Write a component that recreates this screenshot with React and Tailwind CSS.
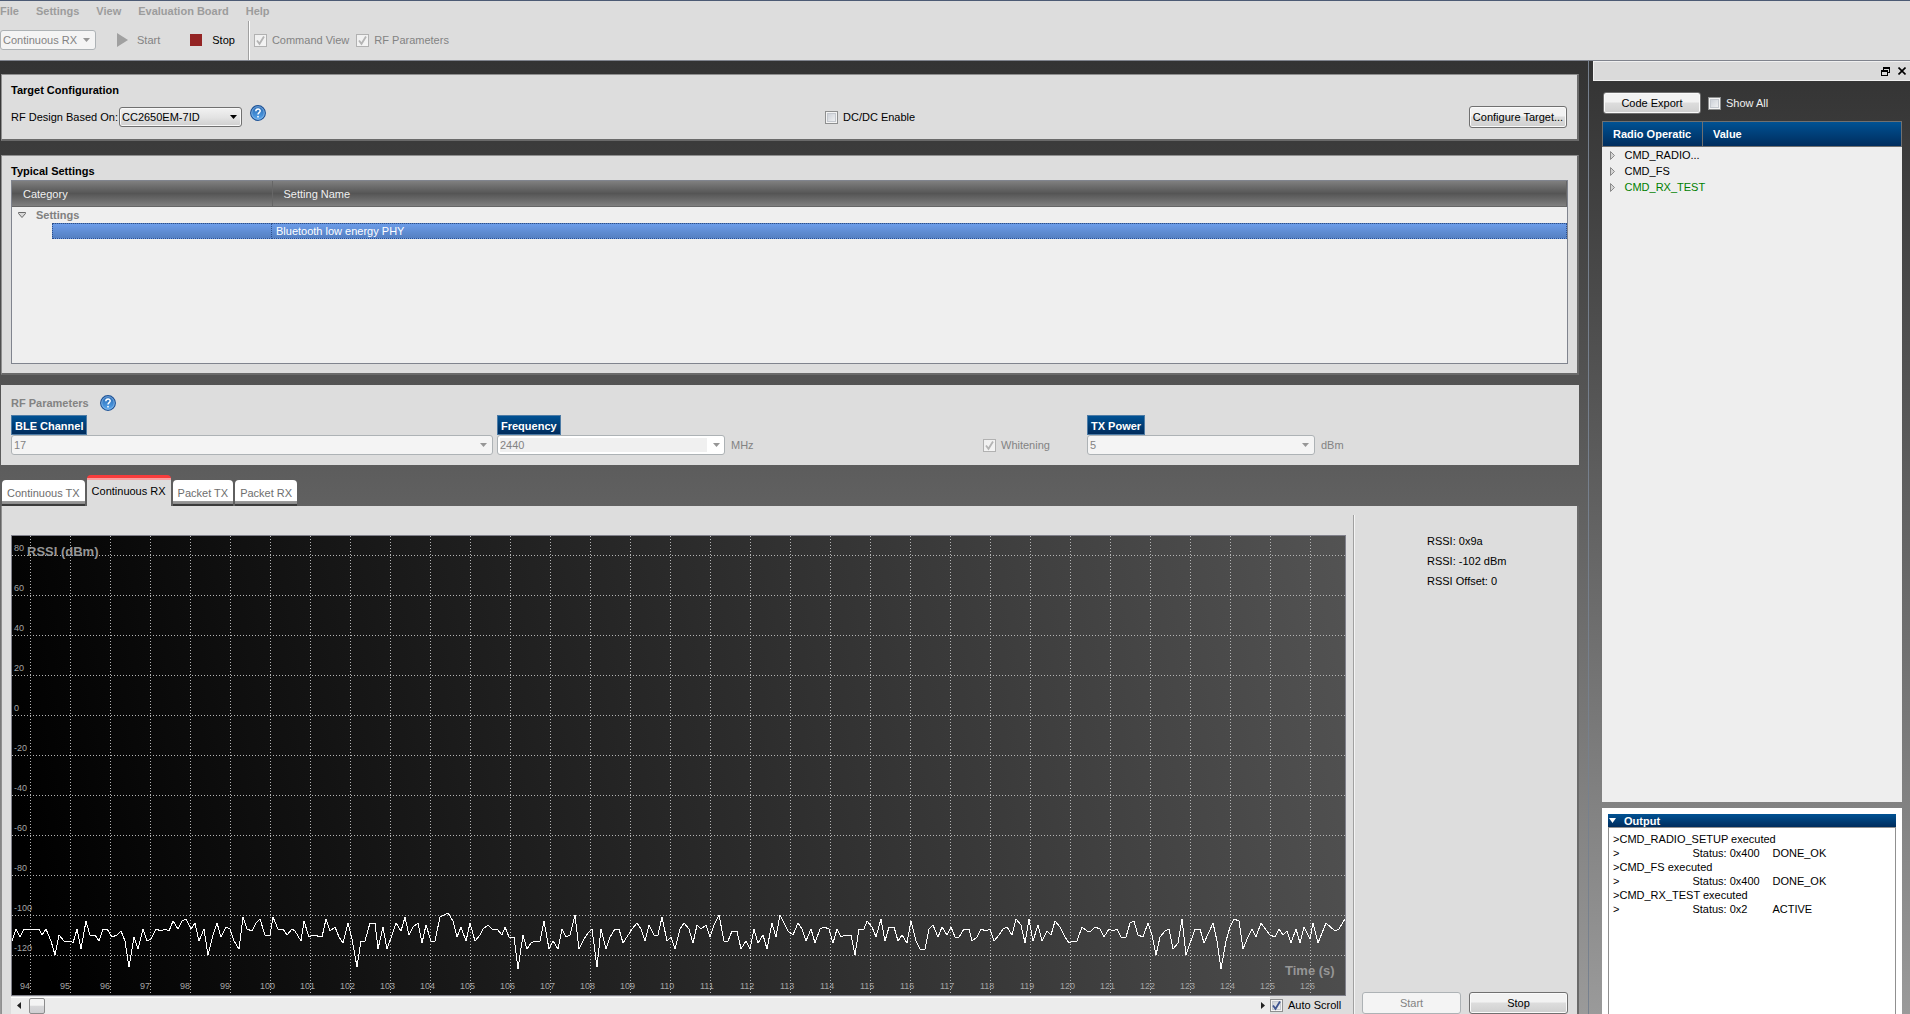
import React, { useState } from 'react'

const X_TICKS = Array.from({ length: 33 }, (_, i) => 94 + i)
const Y_TICKS = [80, 60, 40, 20, 0, -20, -40, -60, -80, -100, -120]

// [x, dBm] pairs
const SAMPLES = [
  [0, -113], [4, -107], [8, -111], [12, -107], [27, -107], [30, -110], [34, -107], [39, -113], [43, -120], [47, -110],
  [52, -113], [59, -113], [61, -114], [65, -107], [69, -117], [74, -103], [78, -110], [83, -110], [87, -113], [91, -107],
  [95, -107], [100, -111], [105, -110], [109, -108], [113, -113], [117, -126], [122, -111], [126, -117], [131, -107], [135, -113],
  [139, -112], [144, -107], [149, -108], [153, -107], [157, -108], [161, -103], [166, -107], [170, -103], [174, -102], [179, -107],
  [183, -104], [187, -113], [192, -107], [196, -120], [201, -110], [205, -104], [209, -111], [214, -106], [218, -107], [222, -113],
  [227, -117], [231, -101], [235, -107], [240, -108], [244, -104], [248, -102], [253, -110], [258, -110], [261, -101], [266, -107],
  [271, -107], [275, -110], [280, -107], [283, -108], [289, -113], [292, -103], [297, -111], [301, -110], [310, -111], [314, -102],
  [318, -108], [323, -106], [327, -111], [331, -114], [336, -104], [340, -112], [345, -126], [349, -113], [353, -113], [358, -104],
  [363, -104], [366, -117], [371, -106], [375, -117], [380, -110], [384, -104], [389, -108], [393, -101], [397, -110], [401, -106],
  [406, -104], [410, -114], [414, -105], [419, -113], [423, -113], [428, -101], [432, -100], [436, -99], [441, -103], [445, -111],
  [449, -106], [454, -113], [458, -104], [463, -113], [468, -110], [471, -107], [476, -105], [480, -107], [485, -107], [490, -110],
  [493, -106], [497, -111], [502, -111], [506, -127], [511, -110], [515, -117], [519, -114], [523, -113], [528, -113], [532, -103],
  [537, -117], [541, -113], [546, -117], [550, -107], [554, -111], [558, -110], [563, -100], [567, -117], [572, -112], [576, -109],
  [580, -107], [585, -126], [589, -107], [594, -117], [598, -111], [603, -107], [607, -107], [611, -114], [620, -107], [625, -104],
  [629, -107], [633, -113], [637, -105], [642, -110], [646, -110], [650, -101], [655, -113], [659, -111], [663, -117], [668, -107],
  [672, -104], [677, -107], [681, -114], [685, -105], [689, -107], [694, -105], [698, -111], [702, -105], [707, -100], [712, -113],
  [716, -113], [720, -108], [725, -108], [729, -117], [734, -113], [738, -117], [742, -107], [746, -114], [751, -110], [755, -117],
  [760, -104], [764, -111], [768, -100], [772, -104], [776, -108], [781, -110], [786, -104], [790, -107], [794, -113], [799, -107],
  [803, -114], [808, -107], [812, -106], [817, -107], [821, -114], [825, -107], [829, -111], [833, -110], [839, -110], [843, -120],
  [847, -107], [852, -107], [855, -103], [860, -106], [864, -111], [869, -102], [873, -113], [877, -106], [882, -106], [886, -113],
  [890, -110], [895, -114], [899, -103], [904, -113], [908, -117], [913, -117], [917, -107], [921, -105], [926, -111], [930, -106],
  [935, -110], [939, -106], [943, -111], [947, -111], [952, -107], [957, -107], [960, -113], [965, -111], [969, -107], [974, -108],
  [978, -107], [982, -113], [987, -110], [991, -107], [995, -106], [1000, -110], [1004, -102], [1009, -105], [1013, -114], [1017, -102],
  [1021, -113], [1026, -105], [1030, -113], [1035, -108], [1039, -110], [1043, -103], [1048, -106], [1053, -111], [1057, -114], [1061, -113],
  [1065, -113], [1070, -106], [1075, -108], [1079, -108], [1083, -106], [1088, -107], [1092, -111], [1097, -107], [1101, -108], [1105, -107],
  [1109, -111], [1114, -111], [1118, -104], [1122, -103], [1126, -110], [1131, -111], [1136, -104], [1140, -110], [1144, -120], [1148, -111],
  [1153, -108], [1157, -107], [1161, -117], [1166, -114], [1170, -102], [1174, -120], [1183, -107], [1188, -107], [1192, -114], [1201, -104],
  [1205, -113], [1209, -127], [1214, -113], [1218, -106], [1222, -102], [1227, -103], [1231, -117], [1236, -111], [1240, -107], [1244, -111],
  [1249, -104], [1258, -110], [1263, -111], [1267, -107], [1271, -110], [1275, -108], [1279, -114], [1284, -107], [1288, -114], [1292, -106],
  [1298, -112], [1301, -104], [1306, -114], [1314, -104], [1323, -108], [1327, -107], [1333, -102],
]

const toX = (t) => 18 + (t - 94) * 40
const toY = (dbm) => 179 - dbm * 2

const OUTPUT = [
  ['CMD_RADIO_SETUP executed'],
  ['Status: 0x400', 'DONE_OK'],
  ['CMD_FS executed'],
  ['Status: 0x400', 'DONE_OK'],
  ['CMD_RX_TEST executed'],
  ['Status: 0x2', 'ACTIVE'],
]

const Check = ({ id, label, checked, disabled, className = '' }) => {
  const [on, setOn] = useState(Boolean(checked))
  return (
    <div className={`flex items-center gap-[5px] ${className}`}>
      <span className="relative flex w-[13px] h-[13px]">
        <input
          id={id}
          type="checkbox"
          checked={on}
          disabled={disabled}
          onChange={(e) => setOn(e.target.checked)}
          className="appearance-none w-[13px] h-[13px] border border-[#8e8f8f] bg-linear-to-br from-[#c5cad2] to-[#f8f8f8] shadow-[inset_0_0_0_1px_#f4f4f4,inset_0_0_0_2px_#c4c8ce] disabled:border-[#b1b1b1] disabled:from-[#f0f0f0] disabled:to-[#f4f4f4] disabled:shadow-none"
        />
        {on && (
          <svg viewBox="0 0 13 13" className={`absolute inset-0 pointer-events-none ${disabled ? 'text-[#b4b4b4]' : 'text-[#3f5590]'}`}>
            <path d="M3 6.5 L5.5 9.8 L10 2.5" fill="none" stroke="currentColor" strokeWidth="1.8" />
          </svg>
        )}
      </span>
      <label htmlFor={id}>{label}</label>
    </div>
  )
}

const Combo = ({ id, options, disabled, label, className = '', arrow = 'right-[6px]', look }) => (
  <div className={`relative flex h-5 ${className}`}>
    <select
      id={id}
      aria-label={label}
      disabled={disabled}
      className={`appearance-none w-full h-5 border rounded-[3px] pl-[2px] pr-[14px] leading-4 opacity-100 ${
        look || (disabled ? 'border-[#adb2b5] bg-[#f4f4f4] text-[#838383]' : 'border-[#707070] bg-linear-to-b from-[#f2f2f2] via-[#e4e4e4] to-[#cfcfcf] text-black shadow-[inset_0_0_0_1px_#f8f8f8]')
      }`}
    >
      {options.map((o) => (
        <option key={o}>{o}</option>
      ))}
    </select>
    <svg viewBox="0 0 7 4" className={`absolute top-2 w-[7px] h-1 pointer-events-none ${arrow} ${disabled ? 'text-[#969696]' : 'text-black'}`}>
      <path d="M0 0 H7 L3.5 4 Z" fill="currentColor" />
    </svg>
  </div>
)

const Help = () => (
  <button aria-label="Help" className="w-4 h-4">
    <svg viewBox="0 0 16 16" className="w-4 h-4">
      <defs>
        <linearGradient id="help" x1="0" y1="0" x2="0" y2="1">
          <stop offset="0" stopColor="#2566b0" />
          <stop offset="1" stopColor="#5aa8ee" />
        </linearGradient>
      </defs>
      <circle cx="8" cy="8" r="7.3" fill="url(#help)" stroke="#1f5498" strokeWidth="1.3" />
      <circle cx="8" cy="8" r="6.3" fill="none" stroke="#a9d0f5" strokeWidth="0.6" />
      <path d="M5.8 6.2 C5.8 3.2 10.3 3.3 10.2 6 C10.1 7.6 8 7.6 8 9.6" fill="none" stroke="#fff" strokeWidth="1.5" />
      <rect x="7.2" y="10.9" width="1.6" height="1.6" fill="#fff" />
    </svg>
  </button>
)

const PushButton = ({ children, disabled, className = '' }) => (
  <button
    disabled={disabled}
    className={`h-[22px] border rounded-[3px] whitespace-nowrap ${
      disabled
        ? 'border-[#adb2b5] bg-[#f4f4f4] text-[#838383]'
        : 'border-[#707070] bg-linear-to-b from-[#f2f2f2] from-45% via-[#dddddd] via-50% to-[#cfcfcf] text-black shadow-[inset_0_0_0_1px_#fafafa]'
    } ${className}`}
  >
    {children}
  </button>
)

const FieldLabel = ({ htmlFor, children }) => (
  <label htmlFor={htmlFor} className="self-start h-5 px-[3px] border border-[#4d7ba5] bg-linear-to-b from-[#005294] to-[#002c5c] text-white font-bold leading-5">
    {children}
  </label>
)

const Chart = () => (
  <svg className="flex-1 w-full min-h-[400px] bg-[linear-gradient(78deg,#000_3%,#535353_100%)]" fontFamily="Liberation Sans, Arial, sans-serif">
    <g stroke="#b4b4b4" strokeDasharray="1 2" shapeRendering="crispEdges">
      {X_TICKS.map((t) => (
        <line key={t} x1={toX(t) + 0.5} x2={toX(t) + 0.5} y1="0" y2="457" />
      ))}
      {Y_TICKS.map((v) => (
        <line key={v} x1="0" x2="100%" y1={toY(v) + 0.5} y2={toY(v) + 0.5} />
      ))}
    </g>
    <g fill="#a4a4a4" fontSize="9">
      {Y_TICKS.map((v) => (
        <text key={v} x="2" y={toY(v) - 4}>{v}</text>
      ))}
      {X_TICKS.map((t) => (
        <text key={t} x={toX(t) - 10} y="453">{t}</text>
      ))}
    </g>
    <g fill="#969696" fontSize="13" fontWeight="bold">
      <text x="15" y="20">RSSI (dBm)</text>
      <text x="1273" y="439">Time (s)</text>
    </g>
    <polyline
      fill="none"
      stroke="#fff"
      strokeWidth="1"
      shapeRendering="crispEdges"
      points={SAMPLES.map(([x, dbm]) => `${x},${toY(dbm)}`).join(' ')}
    />
  </svg>
)

const panel = 'bg-[#dddddd] border-t border-l border-[#8f8f8f] border-b-2 border-r-2 border-b-[#6a6a6a] border-r-[#6a6a6a]'

const App = () => {
  const [tab, setTab] = useState('Continuous RX')

  return (
    <div className="min-h-screen flex flex-col bg-[#dddddd] text-black text-[11px] leading-4 font-['Liberation_Sans',Arial,sans-serif] overflow-hidden">
      {/* Menu bar */}
      <nav className="flex items-center gap-[17px] h-5 border-t border-[#4c5a74] font-bold text-[#9c9c9c]">
        <a href="#file">File</a>
        <a href="#settings">Settings</a>
        <a href="#view">View</a>
        <a href="#board">Evaluation Board</a>
        <a href="#help">Help</a>
      </nav>

      {/* Toolbar */}
      <div className="flex items-center h-[41px] border-b border-[#80848e] text-[#838383]">
        <Combo label="Mode" disabled options={['Continuous RX']} className="w-24" />
        <button disabled className="flex items-center gap-[9px] ml-[21px]">
          <svg viewBox="0 0 11 14" className="w-[11px] h-[14px]">
            <path d="M0 0 L11 7 L0 14 Z" fill="#a0a0a0" />
          </svg>
          Start
        </button>
        <button className="flex items-center gap-[10px] ml-[30px] text-black">
          <span className="w-3 h-3 bg-[#942424]" />
          Stop
        </button>
        <div className="self-stretch w-[2px] ml-[13px] mt-px bg-[#a0a0a0] border-r border-white" />
        <Check id="command-view" label="Command View" checked disabled className="ml-1" />
        <Check id="rf-parameters" label="RF Parameters" checked disabled className="ml-[7px]" />
      </div>

      <div className="flex-1 flex bg-linear-to-b from-[#333333] to-[#9a9a9a]">
        <main className="flex-1 min-w-0 flex flex-col pt-[13px] pl-px pr-[9px] border-r border-[#76808e]">
          {/* Target configuration */}
          <section className={`${panel} h-[67px] pt-[7px] px-[9px]`}>
            <h2 className="font-bold">Target Configuration</h2>
            <div className="flex items-start pt-px">
              <label htmlFor="design" className="mt-[10px]">RF Design Based On:</label>
              <Combo id="design" options={['CC2650EM-7ID']} className="w-[123px] mt-2 ml-px" arrow="right-[5px]" />
              <div className="flex ml-2 mt-[6px]"><Help /></div>
              <Check id="dcdc" label="DC/DC Enable" className="ml-[559px] mt-[10px]" />
              <PushButton className="w-[98px] mt-[7px] ml-auto mr-px">Configure Target...</PushButton>
            </div>
          </section>

          {/* Typical settings */}
          <section className={`${panel} mt-[14px] h-[220px] pt-[7px] px-[9px]`}>
            <h2 className="font-bold">Typical Settings</h2>
            <div className="h-[184px] mt-px border border-[#80848e] bg-[#efefef]">
              <table className="w-full border-collapse table-fixed">
                <colgroup>
                  <col className="w-[260px]" />
                  <col />
                </colgroup>
                <thead>
                  <tr className="h-[25px] bg-linear-to-b from-[#808080] via-[#555555] to-[#808080] text-[#f0f0f0]">
                    <th className="p-0 pt-px pl-[11px] text-left font-normal border border-t-0 border-[#666666] border-l-0">Category</th>
                    <th className="p-0 pt-px pl-[11px] text-left font-normal border border-t-0 border-[#666666]">Setting Name</th>
                  </tr>
                </thead>
                <tbody>
                  <tr className="h-4">
                    <td colSpan={2} className="p-0">
                      <button className="flex items-center gap-[10px] pl-[6px] font-bold text-[#808080]">
                        <svg viewBox="0 0 8 6" className="w-2 h-[6px]">
                          <path d="M0.5 0.5 H7.5 V1.5 L4 5.5 L0.5 1.5 Z" fill="#d8d8d8" stroke="#6a6a6a" />
                        </svg>
                        Settings
                      </button>
                    </td>
                  </tr>
                  <tr className="h-4 text-white">
                    <td className="p-0 pl-10">
                      <div className="h-4 bg-linear-to-b from-[#6c9ce8] to-[#5580c2] border border-dotted border-[#2c4f8c]" />
                    </td>
                    <td className="p-0">
                      <div className="h-4 pl-1 leading-[15px] bg-linear-to-b from-[#6c9ce8] to-[#5580c2] border border-l-0 border-dotted border-[#2c4f8c]">
                        Bluetooth low energy PHY
                      </div>
                    </td>
                  </tr>
                </tbody>
              </table>
            </div>
          </section>

          {/* RF parameters */}
          <section className="mt-[10px] h-20 pt-[10px] pl-[10px] bg-[#dddddd] text-[#838383]">
            <div className="flex items-center gap-[11px] h-4">
              <h2 className="font-bold">RF Parameters</h2>
              <Help />
            </div>
            <div className="grid grid-cols-[486fr_486fr_104fr_492fr] items-end mt-1">
              <div className="flex flex-col pr-1">
                <FieldLabel htmlFor="channel">BLE Channel</FieldLabel>
                <Combo id="channel" disabled options={['17']} />
              </div>
              <div className="flex items-end gap-[6px]">
                <div className="flex flex-col w-[228px]">
                  <FieldLabel htmlFor="frequency">Frequency</FieldLabel>
                  <Combo
                    id="frequency"
                    disabled
                    options={['2440']}
                    arrow="right-[5px]"
                    look="border-[#adb2b5] bg-[linear-gradient(to_left,#ffffff_17px,#f0f0f0_17px)] text-[#838383] shadow-[inset_0_0_0_2px_#ffffff]"
                  />
                </div>
                <span className="h-5 leading-5">MHz</span>
              </div>
              <Check id="whitening" label="Whitening" checked disabled className="h-5" />
              <div className="flex items-end gap-[6px]">
                <div className="flex flex-col w-[228px]">
                  <FieldLabel htmlFor="power">TX Power</FieldLabel>
                  <Combo id="power" disabled options={['5']} />
                </div>
                <span className="h-5 leading-5">dBm</span>
              </div>
            </div>
          </section>

          {/* Tabs */}
          <div role="tablist" className="flex items-end gap-[2px] h-[31px] mt-[10px] pl-px">
            {['Continuous TX', 'Continuous RX', 'Packet TX', 'Packet RX'].map((name) => (
              <button
                key={name}
                role="tab"
                aria-selected={tab === name}
                onClick={() => setTab(name)}
                className={
                  tab === name
                    ? 'h-[31px] px-[5px] rounded-t-[4px] bg-[linear-gradient(#f83c3c_3px,#f8a0a0_3px,#f8a0a0_5px,#dddddd_5px)] text-black'
                    : 'h-[26px] px-[5px] rounded-t-[4px] bg-[linear-gradient(#ffffff_21px,#a0a0a0_21px,#8a8a8a_24px,#3a3a3a_24px)] text-[#6e6e6e]'
                }
              >
                {name}
              </button>
            ))}
          </div>

          <section className="flex-1 flex bg-[#dddddd] border-l border-[#8f8f8f] border-r-2 border-r-[#6a6a6a]">
            <div className="flex-1 min-w-0 flex flex-col pt-[29px] pl-[9px] pr-[7px]">
              <div className="flex-1 flex border border-[#80808a]">
                <Chart />
              </div>
              <div className="flex items-center h-[18px]">
                <div className="flex-1 flex items-center h-[17px] pl-[6px] pr-[5px] bg-[#ececec] border-t border-white">
                  <button aria-label="Scroll left">
                    <svg viewBox="0 0 4 7" className="w-1 h-[7px]"><path d="M4 0 V7 L0 3.5 Z" fill="#222" /></svg>
                  </button>
                  <span className="w-4 h-4 ml-2 border border-[#8c8c8c] rounded-[2px] bg-linear-to-b from-[#f4f4f4] from-45% via-[#d8d8da] via-50% to-[#cfcfd2]" />
                  <button aria-label="Scroll right" className="ml-auto">
                    <svg viewBox="0 0 4 7" className="w-1 h-[7px]"><path d="M0 0 V7 L4 3.5 Z" fill="#222" /></svg>
                  </button>
                </div>
                <Check id="auto-scroll" label="Auto Scroll" checked className="w-[76px] whitespace-nowrap" />
              </div>
            </div>

            <div className="flex flex-col w-[224px] mt-[9px] pt-4 pl-2 pr-[9px] border-l border-[#a0a0a0] shadow-[inset_1px_0_0_#f4f4f4]">
              <div className="pl-[65px] leading-5">
                <p>RSSI: 0x9a</p>
                <p>RSSI: -102 dBm</p>
                <p>RSSI Offset: 0</p>
              </div>
              <div className="flex gap-2 mt-auto">
                <PushButton disabled className="flex-1">Start</PushButton>
                <PushButton className="flex-1">Stop</PushButton>
              </div>
            </div>
          </section>
        </main>

        {/* Command view dock */}
        <aside className="flex flex-col w-[321px] pl-1">
          <div className="flex items-center justify-end gap-2 h-5 pr-1 bg-[#dadada] border border-r-0 border-[#f0f0f0]">
            <button aria-label="Float">
              <svg viewBox="0 0 9 9" className="w-[9px] h-[9px]" fill="none" stroke="#000" shapeRendering="crispEdges">
                <path d="M2.5 3 V0.5 H8.5 V5.5 H6 M2 1.5 H9" />
                <path d="M0.5 3.5 H6.5 V8.5 H0.5 Z M0 4.5 H7" />
              </svg>
            </button>
            <button aria-label="Close">
              <svg viewBox="0 0 8 8" className="w-2 h-2"><path d="M0.5 0.5 L7.5 7.5 M7.5 0.5 L0.5 7.5" stroke="#000" strokeWidth="1.6" /></svg>
            </button>
          </div>

          <div className="flex-1 flex flex-col pt-[11px] pl-[9px] pr-2">
            <div className="flex items-center gap-[7px] pl-px">
              <PushButton className="w-[98px]">Code Export</PushButton>
              <Check id="show-all" label="Show All" className="text-[#f0f0f0]" />
            </div>

            <div className="flex-1 mt-[7px] bg-[#eeeeee]">
              <table className="w-full border-collapse table-fixed">
                <colgroup>
                  <col className="w-[100px]" />
                  <col />
                </colgroup>
                <thead>
                  <tr className="h-[25px] bg-linear-to-b from-[#005294] to-[#002c5c] text-white">
                    <th className="p-0 pl-[10px] pr-[9px] text-left font-bold whitespace-nowrap overflow-hidden border border-[#707070]">
                      <div className="overflow-hidden">Radio Operatic</div>
                    </th>
                    <th className="p-0 pl-[10px] text-left font-bold border border-[#707070]">Value</th>
                  </tr>
                </thead>
                <tbody>
                  {['CMD_RADIO...', 'CMD_FS', 'CMD_RX_TEST'].map((cmd) => (
                    <tr key={cmd} className="h-4">
                      <td className="p-0">
                        <button className={`flex items-center gap-[10px] pl-[7px] whitespace-nowrap ${cmd === 'CMD_RX_TEST' ? 'text-[#008000]' : 'text-black'}`}>
                          <svg viewBox="0 0 5 9" className="w-[5px] h-[9px]">
                            <path d="M0.5 0.5 L4.5 4.5 L0.5 8.5 Z" fill="#d4d4d4" stroke="#8a8a8a" />
                          </svg>
                          {cmd}
                        </button>
                      </td>
                      <td className="p-0" />
                    </tr>
                  ))}
                </tbody>
              </table>
            </div>

            {/* Output log */}
            <section className="flex flex-col h-[206px] mt-[6px] px-[6px] pt-[6px] bg-white">
              <button className="flex items-center gap-2 h-[13px] pl-px bg-linear-to-b from-[#005294] to-[#002c5c] text-white font-bold">
                <svg viewBox="0 0 7 5" className="w-[7px] h-[5px]"><path d="M0 0 H7 L3.5 5 Z" fill="#fff" /></svg>
                Output
              </button>
              <div className="flex-1 border border-b-0 border-[#909090] pl-1 pt-1 leading-[14px]">
                {OUTPUT.map(([text, result], i) => (
                  <div key={i} className="flex">
                    <span>&gt;</span>
                    {result ? (
                      <>
                        <span className="w-20 ml-[73px]">{text}</span>
                        <span>{result}</span>
                      </>
                    ) : (
                      <span>{text}</span>
                    )}
                  </div>
                ))}
              </div>
            </section>
          </div>
        </aside>
      </div>
    </div>
  )
}

export default App
